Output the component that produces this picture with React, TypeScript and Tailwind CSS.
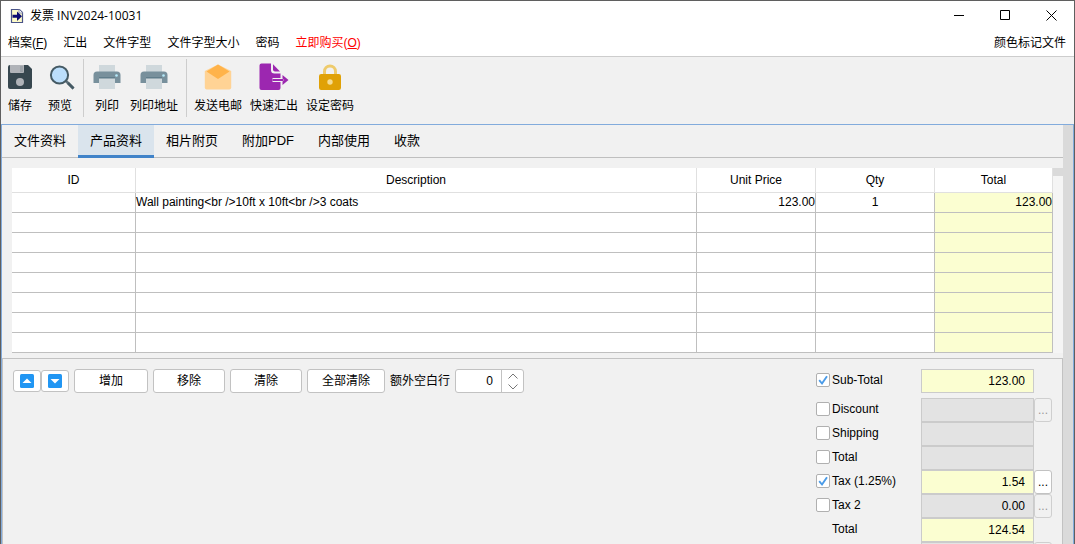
import { useState } from "react";
import type { ReactNode } from "react";

const cjk = "font-['Liberation_Sans','Noto_Sans_CJK_SC',sans-serif]";

function AppIcon() {
  return (
    <svg width="14" height="16" viewBox="0 0 14 16" aria-hidden="true">
      <path d="M1.500 1.500h8l3 3v10h-11z" fill="#fdfbc8" stroke="#4a5488" strokeWidth="1.200" />
      <path d="M9 1.500v3.500h3.500" fill="#fff" stroke="#8d93b5" />
      <path d="M2.500 6.800h4.500V3.500L12 8.300 7 13V9.800H2.500z" fill="#0b0b72" />
    </svg>
  );
}

function SaveIcon() {
  return (
    <svg width="26" height="26" viewBox="0 0 26 26" className="shrink-0" aria-hidden="true">
      <path d="M3 1h18l4 4v18a2 2 0 0 1-2 2H3a2 2 0 0 1-2-2V3a2 2 0 0 1 2-2z" fill="#37474f" />
      <path d="M3 1h14v7a1 1 0 0 1-1 1H4a1 1 0 0 1-1-1z" fill="#b0b3b8" />
      <path d="M13 2h3v6h-3z" fill="#9da3a9" />
      <circle cx="13" cy="18" r="4" fill="#b0b3b8" />
    </svg>
  );
}

function PreviewIcon() {
  return (
    <svg width="26" height="26" viewBox="0 0 26 26" className="ml-1 shrink-0" aria-hidden="true">
      <path d="M17 17l7.500 7.500" stroke="#60717b" strokeWidth="2.600" />
      <path d="M19 19l5.500 5.500" stroke="#455a64" strokeWidth="2.600" />
      <circle cx="10.500" cy="11" r="8.600" fill="#bbdefb" stroke="#455a64" strokeWidth="2" />
    </svg>
  );
}

function PrinterIcon() {
  return (
    <svg width="28" height="26" viewBox="0 0 28 26" className="shrink-0" aria-hidden="true">
      <path d="M6 1h16v9H6z" fill="#cfd8dc" />
      <path d="M4 7.500h20a3.500 3.500 0 0 1 3.500 3.500v8H.5v-8A3.500 3.500 0 0 1 4 7.500z" fill="#78909c" />
      <path d="M6 14h16v11H6z" fill="#cfd8dc" />
      <path d="M6 13h16v1.500H6z" fill="#607d8b" />
      <circle cx="23.500" cy="11.500" r="1.300" fill="#b5eafa" />
    </svg>
  );
}

function MailIcon() {
  return (
    <svg width="28" height="28" viewBox="0 0 28 28" className="shrink-0" aria-hidden="true">
      <path d="M.8 8L14 1.500 27.200 8v16.500a2 2 0 0 1-2 2H2.800a2 2 0 0 1-2-2z" fill="#ffd395" />
      <path d="M2.500 8.500L14 1.500 25.500 8.500 14 16z" fill="#ffb34a" />
    </svg>
  );
}

function ExportIcon() {
  return (
    <svg width="30" height="28" viewBox="0 0 30 28" className="shrink-0" aria-hidden="true">
      <path d="M2.500 .5h9.500v6.500a3.500 3.500 0 0 0 3.500 3.500h6V15H13.500v4H21.500v6a2 2 0 0 1-2 2H2.500a2 2 0 0 1-2-2V2.500a2 2 0 0 1 2-2z" fill="#9c27b0" />
      <path d="M14 1.200L21 8.500h-5A2 2 0 0 1 14 6.500z" fill="#9c27b0" />
      <path d="M13.500 16h11v2h-11z" fill="#9c27b0" />
      <path d="M23.500 12l6 5-6 5v-3.500l1.800-1.500-1.800-1.500z" fill="#9c27b0" />
    </svg>
  );
}

function LockIcon() {
  return (
    <svg width="24" height="28" viewBox="0 0 24 28" className="shrink-0" aria-hidden="true">
      <path d="M6.500 14V8.500a5.500 5.500 0 0 1 11 0V14" fill="none" stroke="#eecb6c" strokeWidth="3" />
      <rect x="1" y="11" width="22" height="16" rx="2.200" fill="#e0a106" />
      <circle cx="12" cy="19" r="2.700" fill="#f5dc93" />
    </svg>
  );
}

function MoveIcon({ down = false }: { down?: boolean }) {
  return (
    <svg width="14" height="14" viewBox="0 0 14 14" aria-hidden="true">
      <rect width="14" height="14" rx="1.500" fill="#2196f3" />
      <path d={down ? "M2.500 5h9L7 9.500z" : "M2.500 9h9L7 4.500z"} fill="#fff" />
    </svg>
  );
}

function ToolButton({ icon, children }: { icon: ReactNode; children: ReactNode }) {
  return (
    <button type="button" className="flex flex-col items-center px-1">
      <span className="flex h-8 w-6 items-center justify-center">{icon}</span>
      <span className="mt-[5px] leading-4 whitespace-nowrap">{children}</span>
    </button>
  );
}

const edge = "border border-[#c2c2c2] bg-white";

function ActionButton({ children, width = "w-[72px]" }: { children: ReactNode; width?: string }) {
  return (
    <button type="button" className={`${edge} h-6 rounded-[3px] leading-4 ${width}`}>
      {children}
    </button>
  );
}

type Charge = { id: string; label: string; value: string; check?: boolean; checked?: boolean; active?: boolean; more?: string };

const charges: Charge[] = [
  { id: "subtotal", label: "Sub-Total", value: "123.00", check: true, checked: true, active: true },
  { id: "discount", label: "Discount", value: "", check: true, more: "..." },
  { id: "shipping", label: "Shipping", value: "", check: true },
  { id: "total1", label: "Total", value: "", check: true },
  { id: "tax1", label: "Tax (1.25%)", value: "1.54", check: true, checked: true, active: true, more: "..." },
  { id: "tax2", label: "Tax 2", value: "0.00", check: true, more: "..." },
  { id: "grand", label: "Total", value: "124.54", active: true },
  { id: "paid", label: "", value: "", more: " " },
];

function ChargeRow({ row }: { row: Charge }) {
  const [on, setOn] = useState(!!row.checked);
  const first = row.id === "subtotal";
  return (
    <div className={`flex h-6 items-center ${first ? "mb-[5px]" : ""}`}>
      <div className="flex w-[105px] items-center gap-0.5 pb-0.5">
        {row.check ? (
          <span className="grid size-3.5 shrink-0">
            <input
              id={`${row.id}-on`}
              type="checkbox"
              checked={on}
              onChange={() => setOn(!on)}
              className="col-start-1 row-start-1 size-3.5 appearance-none rounded-[2px] border border-[#b0b0b0] bg-white"
            />
            {on && (
              <svg viewBox="0 0 14 14" className="pointer-events-none col-start-1 row-start-1 size-3.5" aria-hidden="true">
                <path d="M3.200 7.200l2.800 3.300 5-7.300" fill="none" stroke="#4a9be8" strokeWidth="1.900" />
              </svg>
            )}
          </span>
        ) : (
          <span className="size-3.5 shrink-0" />
        )}
        <label htmlFor={row.check ? `${row.id}-on` : row.id} className="leading-4 whitespace-nowrap">
          {row.label}
        </label>
      </div>
      <input
        id={row.id}
        aria-label={row.label || "Paid"}
        readOnly
        value={row.value}
        className={`h-6 w-[113px] border border-[#cbcbcb] pr-2 text-right ${row.active ? "bg-[#fbfed1]" : "bg-[#e3e3e3]"}`}
      />
      {row.more && (
        <button
          type="button"
          disabled={!row.active}
          aria-label={`${row.label} options`}
          className={`h-6 w-[18px] rounded-[3px] border leading-4 ${row.active ? "border-[#c2c2c2] bg-white" : "border-[#cfcfcf] bg-[#f1f1f1] text-[#999]"}`}
        >
          {row.more}
        </button>
      )}
    </div>
  );
}

const tabs = ["文件资料", "产品资料", "相片附页", "附加PDF", "内部使用", "收款"];
const columns = ["ID", "Description", "Unit Price", "Qty", "Total"];
const items = [["", "Wall painting<br />10ft x 10ft<br />3 coats", "123.00", "1", "123.00"]];
const rows = Array.from({ length: 8 }, (_, i) => items[i] ?? ["", "", "", "", ""]);
const align = ["text-left", "text-left", "text-right", "text-center", "text-right bg-[#fbfed1]"];

export default function App() {
  const [tab, setTab] = useState(1);
  const [blank, setBlank] = useState(0);
  return (
    <div className={`flex h-screen flex-col overflow-hidden border-x border-t border-[#5f5f5f] bg-[#f1f1f1] text-[12px] text-black ${cjk}`}>
      <header className="shrink-0 border-b border-[#cdcdcd] bg-white">
        <div className="flex h-[29px] items-center justify-between pl-[9px]">
          <h1 className="flex items-center gap-1.5 font-['Open_Sans','Noto_Sans_CJK_SC',sans-serif] text-[12px] leading-4">
            <AppIcon />
            发票 INV2024-10031
          </h1>
          <div className="flex">
            <button type="button" aria-label="Minimize" className="grid h-7 w-[46px] place-items-center">
              <svg width="11" height="11" aria-hidden="true"><path d="M0 5.500h10" stroke="#000" /></svg>
            </button>
            <button type="button" aria-label="Maximize" className="grid h-7 w-[46px] place-items-center">
              <svg width="11" height="11" aria-hidden="true"><path d="M.5.5h9v9h-9z" fill="none" stroke="#000" /></svg>
            </button>
            <button type="button" aria-label="Close" className="grid h-7 w-[46px] place-items-center">
              <svg width="11" height="11" aria-hidden="true"><path d="M.5.5l10 10M10.500.5l-10 10" stroke="#000" /></svg>
            </button>
          </div>
        </div>
        <nav className="flex h-[26px] items-center gap-4 pr-2 pl-[7px] leading-4">
          <button type="button">档案(<u>F</u>)</button>
          <button type="button">汇出</button>
          <button type="button">文件字型</button>
          <button type="button">文件字型大小</button>
          <button type="button">密码</button>
          <button type="button" className="text-[#f00]">立即购买(<u>O</u>)</button>
          <button type="button" className="ml-auto">颜色标记文件</button>
        </nav>
      </header>

      <div className="flex h-[67px] shrink-0 items-start pt-0.5 pl-[3px]">
        <div className="flex gap-2 pt-0.5 pr-[7px]">
          <ToolButton icon={<SaveIcon />}>储存</ToolButton>
          <ToolButton icon={<PreviewIcon />}>预览</ToolButton>
        </div>
        <div className="flex h-[58px] gap-[3px] border-l border-[#cdcdcd] pt-0.5 pr-1 pl-[7px]">
          <ToolButton icon={<PrinterIcon />}>列印</ToolButton>
          <ToolButton icon={<PrinterIcon />}>列印地址</ToolButton>
        </div>
        <div className="flex h-[58px] border-l border-[#cdcdcd] pt-0.5 pl-[3px]">
          <ToolButton icon={<MailIcon />}>发送电邮</ToolButton>
          <ToolButton icon={<ExportIcon />}>快速汇出</ToolButton>
          <ToolButton icon={<LockIcon />}>设定密码</ToolButton>
        </div>
      </div>

      <div className="flex min-h-0 grow border-x border-t border-[#82abdc]">
        <main className="flex min-w-0 grow flex-col">
          <div role="tablist" className="flex h-[33px] shrink-0 border-b border-[#bfbfbf]">
            {tabs.map((name, i) => (
              <button
                key={name}
                type="button"
                role="tab"
                aria-selected={i === tab}
                onClick={() => setTab(i)}
                className={`h-[33px] border-b-[3px] px-3 pt-0.5 text-[13px] leading-4 whitespace-nowrap ${i === tab ? "border-[#4083c9] bg-[#dae4ed]" : "border-transparent"}`}
              >
                {name}
              </button>
            ))}
          </div>

          <div className="flex shrink-0 pt-2.5 pb-[5px] pl-2.5">
            <table className="grow table-fixed border-separate border-spacing-0 bg-white">
              <colgroup>
                <col className="w-[124px]" />
                <col />
                <col className="w-[119px]" />
                <col className="w-[119px]" />
                <col className="w-[118px]" />
              </colgroup>
              <thead>
                <tr>
                  {columns.map((name) => (
                    <th key={name} className="h-[25px] border-r border-b border-[#e0e0e0] p-0 leading-4 font-normal">{name}</th>
                  ))}
                </tr>
              </thead>
              <tbody>
                {rows.map((row, r) => (
                  <tr key={r}>
                    {row.map((cell, c) => (
                      <td key={c} className={`h-5 border-r border-b border-[#bfbfbf] p-0 pb-0.5 leading-4 ${align[c]}`}>{cell}</td>
                    ))}
                  </tr>
                ))}
              </tbody>
            </table>
            <div className="w-2.5 bg-[#f5f5f5]">
              <div className="h-2 bg-[#dadada]" />
            </div>
          </div>

          <section className="flex min-h-0 grow items-start justify-between border border-b-0 border-[#c2c2c2] pt-2.5 pr-2.5 pl-2.5">
            <div className="flex items-center">
              <button type="button" aria-label="Move up" className={`${edge} grid h-[22px] w-7 place-items-center rounded-[3px]`}><MoveIcon /></button>
              <button type="button" aria-label="Move down" className={`${edge} grid h-[22px] w-7 place-items-center rounded-[3px]`}><MoveIcon down /></button>
              <div className="ml-[5px] flex items-center gap-[5px]">
                <ActionButton width="w-[74px]">增加</ActionButton>
                <ActionButton>移除</ActionButton>
                <ActionButton>清除</ActionButton>
                <ActionButton width="w-[78px]">全部清除</ActionButton>
                <label htmlFor="blank" className="leading-4">额外空白行</label>
                <div className={`${edge} flex h-6 w-[69px] rounded-[3px]`}>
                  <input
                    id="blank"
                    inputMode="numeric"
                    value={blank}
                    onChange={(e) => setBlank(Number(e.target.value) || 0)}
                    className="w-[46px] border-r border-[#c2c2c2] pr-2 text-right"
                  />
                  <div className="flex grow flex-col">
                    <button type="button" aria-label="Increase" onClick={() => setBlank(blank + 1)} className="grid grow place-items-center">
                      <svg width="10" height="6" aria-hidden="true"><path d="M.5 5.500L5 1l4.500 4.500" fill="none" stroke="#777" /></svg>
                    </button>
                    <button type="button" aria-label="Decrease" onClick={() => setBlank(Math.max(0, blank - 1))} className="grid grow place-items-center">
                      <svg width="10" height="6" aria-hidden="true"><path d="M.5.5L5 5 9.500.5" fill="none" stroke="#777" /></svg>
                    </button>
                  </div>
                </div>
              </div>
            </div>
            <div className="flex w-[236px] shrink-0 flex-col">
              {charges.map((row) => <ChargeRow key={row.id} row={row} />)}
            </div>
          </section>
        </main>
        <div className="w-2.5 shrink-0 bg-[#dadada]" />
      </div>
    </div>
  );
}
